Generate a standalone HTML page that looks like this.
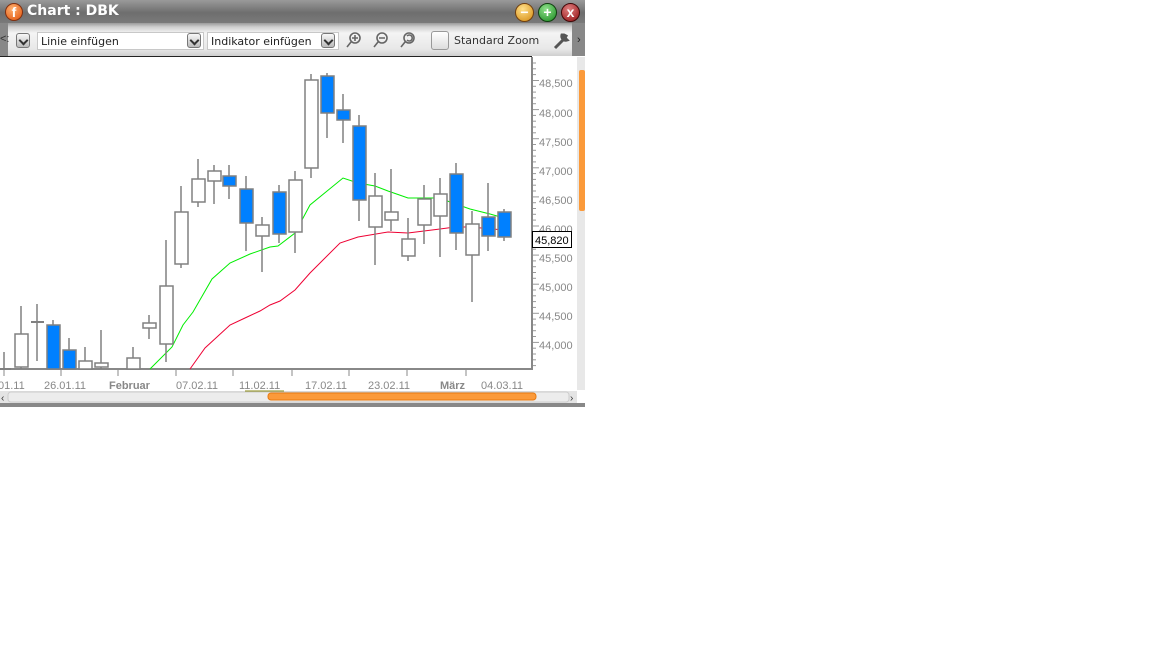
<!DOCTYPE html>
<html><head><meta charset="utf-8"><style>
body{margin:0;width:1152px;height:648px;background:#fff;position:relative;overflow:hidden;font-family:"Liberation Sans","DejaVu Sans",sans-serif}
.title{position:absolute;left:0;top:0;width:585px;height:23px;background:linear-gradient(#9a9a9a,#6e6e6e 55%,#7a7a7a)}
.tb{position:absolute;left:0;top:23px;width:585px;height:33px;background:linear-gradient(#9a9a9a 0,#cfcfcf 4px,#f4f4f4 10px,#e8e8e8 26px,#cfcfcf)}
.sel{position:absolute;top:32px;height:18px;background:#fff;border:1px solid #c8c8c8;font-size:12px;line-height:18px;color:#222;box-sizing:border-box;padding-left:3px;font-family:"DejaVu Sans",sans-serif;font-size:11px}
.dd{position:absolute;top:33px;width:14px;height:15px;border:1px solid #777;border-radius:3px;background:linear-gradient(#f8f8f8,#bbb);box-sizing:border-box}
.dd:after{content:"";position:absolute;left:3px;top:3px;width:5px;height:5px;border-right:2px solid #333;border-bottom:2px solid #333;transform:rotate(45deg)}
.ci{position:absolute;top:3px;width:17px;height:17px;border-radius:50%;color:#fff;font-weight:bold;text-align:center;font-size:14px;line-height:17px}
</style></head><body>
<div class="title"></div>
<div class="ci" style="left:5px;background:radial-gradient(circle at 40% 30%,#ffb070,#e0520a);border:1px solid #803010;width:16px;height:16px;top:3px">f</div>
<div style="position:absolute;left:27px;top:3px;color:#fff;font-weight:bold;font-size:14px;font-family:'DejaVu Sans',sans-serif">Chart : DBK</div>
<div class="ci" style="left:515px;background:radial-gradient(circle at 40% 30%,#ffe08a,#d48a10);border:1px solid #704010">−</div>
<div class="ci" style="left:538px;background:radial-gradient(circle at 40% 30%,#8fe08a,#1a8a20);border:1px solid #104010">+</div>
<div class="ci" style="left:561px;background:radial-gradient(circle at 40% 30%,#e08080,#900d10);border:1px solid #400808">x</div>
<div class="tb"></div>
<div style="position:absolute;left:0;top:23px;width:8px;height:33px;background:#888"></div>
<div style="position:absolute;left:0;top:33px;font-size:11px;color:#333">&lt;:</div>
<div class="dd" style="left:16px"></div>
<div class="sel" style="left:37px;width:167px">Linie einfügen</div>
<div class="dd" style="left:187px"></div>
<div class="sel" style="left:207px;width:132px">Indikator einfügen</div>
<div class="dd" style="left:321px"></div>
<svg style="position:absolute;left:343px;top:30px" width="80" height="22" fill="none" stroke="#666" stroke-width="1.6">
<circle cx="12" cy="8" r="5"/><path d="M9 8h6M12 5v6M8 12l-4 5" /><circle cx="39" cy="8" r="5"/><path d="M36 8h6M35 12l-4 5"/><circle cx="66" cy="8" r="5"/><path d="M64 6a3 3 0 1 1 0 4M62 12l-4 5"/></svg>
<div style="position:absolute;left:431px;top:31px;width:16px;height:17px;border:1px solid #999;border-radius:3px;background:linear-gradient(#fff,#ddd)"></div>
<div style="position:absolute;left:454px;top:34px;font-size:11px;color:#333;font-family:'DejaVu Sans',sans-serif">Standard Zoom</div>
<svg style="position:absolute;left:552px;top:32px" width="18" height="18"><path d="M3 16L11 8M10 3a4 4 0 0 0 5 5l-2-2 1-2-2-1z" stroke="#555" stroke-width="3" fill="#555"/></svg>
<div style="position:absolute;left:572px;top:23px;width:13px;height:33px;background:#888"></div>
<div style="position:absolute;left:577px;top:34px;font-size:11px;color:#222">›</div>
<div style="position:absolute;left:0;top:56px;width:532px;height:1px;background:#222"></div>
<svg style="position:absolute;left:0;top:56px" width="585" height="351" viewBox="0 56 585 351" font-family="Liberation Sans, sans-serif">
<rect x="0" y="57" width="585" height="350" fill="#fff"/>
<line x1="532" y1="57" x2="532" y2="370" stroke="#888" stroke-width="2"/>
<line x1="0" y1="369" x2="533" y2="369" stroke="#888" stroke-width="2"/>
<g stroke="#999" stroke-width="1" id="ticks"></g>
<g fill="#888" font-size="11">
<text x="539" y="87">48,500</text><text x="539" y="117">48,000</text><text x="539" y="146">47,500</text><text x="539" y="175">47,000</text><text x="539" y="204">46,500</text><text x="539" y="233">46,000</text><text x="539" y="262">45,500</text><text x="539" y="291">45,000</text><text x="539" y="320">44,500</text><text x="539" y="349">44,000</text>
</g>
<rect x="532.5" y="231.5" width="39" height="16" fill="#fff" stroke="#000"/>
<text x="535" y="244" font-size="11" fill="#000">45,820</text>
<g fill="#888" font-size="11">
<text x="-2" y="389">01.11</text><text x="44" y="389">26.01.11</text><text x="109" y="389" font-weight="bold">Februar</text><text x="176" y="389">07.02.11</text><text x="239" y="389">11.02.11</text><text x="305" y="389">17.02.11</text><text x="368" y="389">23.02.11</text><text x="440" y="389" font-weight="bold">März</text><text x="481" y="389">04.03.11</text>
</g>
<g stroke="#888"><path d="M4 370v6M61 370v6M118 370v6M176 370v6M233 370v6M292 370v6M349 370v6M407 370v6M466 370v6"/></g>
<rect x="0" y="391" width="577" height="12" fill="#e4e4e4"/>
<rect x="8" y="392" width="561" height="10" rx="3" fill="#ececec" stroke="#ccc"/>
<rect x="268" y="393" width="268" height="7" rx="3" fill="#fb9a3a" stroke="#e87a10"/>
<line x1="245" y1="391" x2="284" y2="391" stroke="#222"/>
<line x1="245" y1="391" x2="284" y2="391" stroke="#ee0" stroke-width="0.5"/>
<text x="1" y="401" font-size="10" fill="#333">‹</text><text x="570" y="401" font-size="10" fill="#333">›</text>
<rect x="577" y="57" width="8" height="333" fill="#e8e8e8"/>
<rect x="579" y="70" width="6" height="141" rx="2" fill="#fb9a3a"/>
<rect x="0" y="403" width="585" height="4" fill="#888"/>
<polyline fill="none" stroke="#00ee00" points="150,369 172,347 183,325 193,312 212,279 230,263 250,254 270,247 278,246 295,233 310,205 343,178 358,183 375,186 388,191 408,198 440,198 450,202 470,209 490,214 504,218"/>
<polyline fill="none" stroke="#ee0033" points="190,369 205,348 230,325 245,318 260,311 270,305 280,301 295,290 310,273 320,263 340,243 358,237 388,232 408,233 440,229 455,227 470,227 504,230"/>
<g stroke="#808080" stroke-width="1.5" id="c"></g>
</svg>
<script>
var C=[[4,352,369,369,369,0],[21,306,334,367,369,0],[37,304,322,322,361,0],[53,320,325,369,369,1],[69,338,350,369,369,1],[85,347,361,369,369,0],[101,330,363,367,369,0],[133,347,358,369,369,0],[149,315,323,328,339,0],[166,240,286,344,362,0],[181,186,212,264,268,0],[198,159,179,202,207,0],[214,165,171,181,204,0],[229,165,176,186,199,1],[246,176,189,223,251,1],[262,217,225,236,272,0],[279,185,192,234,243,1],[295,171,180,232,253,0],[311,74,80,168,178,0],[327,73,76,113,138,1],[343,94,110,120,143,1],[359,115,126,200,221,1],[375,173,196,227,265,0],[391,169,212,220,231,0],[408,218,239,256,261,0],[424,185,199,225,244,0],[440,178,194,216,257,0],[456,163,174,233,250,1],[472,211,224,255,302,0],[488,183,217,236,251,1],[504,209,212,237,241,1]];
var g=document.getElementById('c'),s='';
C.forEach(function(c){s+='<line x1="'+c[0]+'" y1="'+c[1]+'" x2="'+c[0]+'" y2="'+c[4]+'"/>';if(c[3]-c[2]<2){s+='<line x1="'+(c[0]-6)+'" y1="'+c[2]+'" x2="'+(c[0]+7)+'" y2="'+c[2]+'" stroke-width="2"/>'}else s+='<rect x="'+(c[0]-6)+'" y="'+c[2]+'" width="13" height="'+(c[3]-c[2])+'" fill="'+(c[5]?'#0080ff':'#fff')+'"/>'});
g.innerHTML=s;
var t='';for(var y=63;y<369;y+=5.82){var w=(Math.round((y-83)/5.82)%5==0)?6:3;t+='<line x1="533" y1="'+y.toFixed(1)+'" x2="'+(533+w)+'" y2="'+y.toFixed(1)+'"/>'}
document.getElementById('ticks').innerHTML=t;
</script>
</body></html>
